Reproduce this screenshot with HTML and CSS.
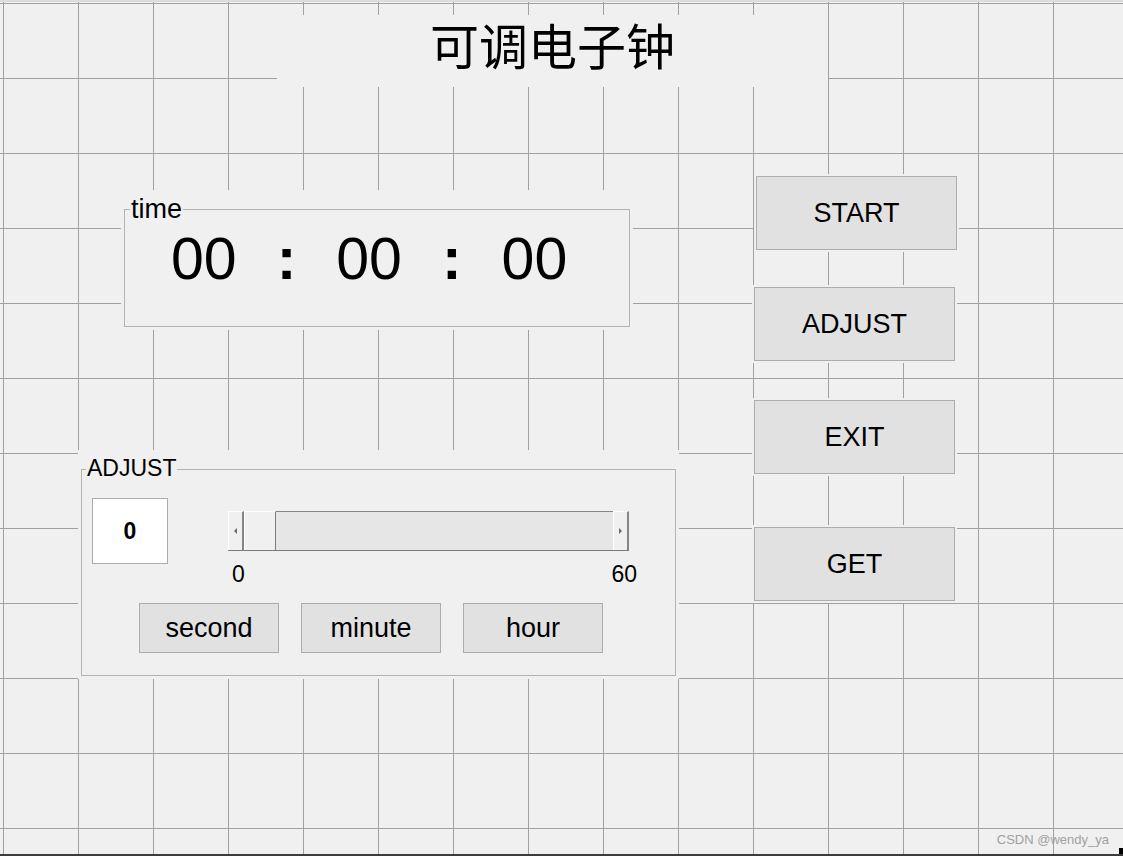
FILE: index.html
```html
<!DOCTYPE html>
<html lang="zh-CN">
<head>
    <meta charset="UTF-8">
    <meta name="viewport" content="width=device-width, initial-scale=1.0">
    <title>可调电子钟</title>
    <link rel="stylesheet" href="styles.css">
</head>
<body>
    <div class="figure">
        <div class="title">可调电子钟</div>
        <div class="workspace">
            <div class="panels">
                <div class="panel time-panel">
                    <span class="panel-label">time</span>
                    <div class="clock">
                        <span id="hours">00</span>
                        <span class="colon">:</span>
                        <span id="minutes">00</span>
                        <span class="colon">:</span>
                        <span id="seconds">00</span>
                    </div>
                </div>
                <div class="panel adjust-panel">
                    <span class="panel-label">ADJUST</span>
                    <div class="adjust-row">
                        <div class="edit-box" id="valueBox">0</div>
                        <div class="slider-group">
                            <div class="slider">
                                <span class="slider-arrow left"><i></i></span>
                                <span class="slider-thumb"></span>
                                <span class="slider-track"></span>
                                <span class="slider-arrow right"><i></i></span>
                            </div>
                            <div class="slider-scale">
                                <span>0</span>
                                <span>60</span>
                            </div>
                        </div>
                    </div>
                    <div class="unit-buttons">
                        <button class="btn unit-btn">second</button>
                        <button class="btn unit-btn">minute</button>
                        <button class="btn unit-btn">hour</button>
                    </div>
                </div>
            </div>
            <div class="actions">
                <button class="btn action-btn start">START</button>
                <button class="btn action-btn adjust">ADJUST</button>
                <button class="btn action-btn exit">EXIT</button>
                <button class="btn action-btn get">GET</button>
            </div>
        </div>
        <div class="watermark">CSDN @wendy_ya</div>
        <div class="resize-handle"></div>
    </div>
</body>
</html>
```

FILE: styles.css
```css
body {
    margin: 0;
    font-family: "Liberation Sans", Arial, sans-serif;
    color: #000;
}
.figure {
    position: relative;
    width: 1123px;
    height: 856px;
    box-sizing: border-box;
    border-top: 2px solid #dcdcdc;
    border-bottom: 2px solid #3c3c3c;
    background-color: #f0f0f0;
    background-image:
        linear-gradient(to right, #a0a0a0 1px, transparent 1px),
        linear-gradient(to bottom, #a0a0a0 1px, transparent 1px);
    background-size: 75px 75px;
    background-position: 3px 1px;
    overflow: hidden;
}
.title {
    margin: 13px 0 0 277px;
    width: 551px;
    height: 72px;
    background: #f0f0f0;
    font-family: "Noto Sans CJK SC", sans-serif;
    font-size: 49px;
    line-height: 58px;
    text-align: center;
}
.workspace {
    display: flex;
    align-items: flex-start;
}
.panels {
    display: flex;
    flex-direction: column;
    align-items: flex-start;
    margin-left: 81px;
}
.panel {
    position: relative;
    box-sizing: border-box;
    border: 1px solid #b4b4b4;
    background: #f0f0f0;
    box-shadow: 0 0 0 3px #f0f0f0, 0 -16px 0 3px #f0f0f0;
}
.panel-label {
    position: absolute;
    background: #f0f0f0;
    padding: 0 1px;
}
.time-panel {
    margin: 122px 0 0 43px;
    width: 506px;
    height: 118px;
    padding: 20px 0 0 46px;
}
.time-panel .panel-label {
    left: 5px;
    top: -14px;
    font-size: 27px;
    line-height: 27px;
}
.clock {
    display: flex;
    gap: 40px;
    font-size: 59px;
    line-height: 59px;
}
.colon {
    font-weight: bold;
}
.adjust-panel {
    margin-top: 142px;
    width: 595px;
    height: 207px;
    padding: 28px 0 0 10px;
}
.adjust-panel .panel-label {
    left: 4px;
    top: -13px;
    font-size: 23px;
    line-height: 23px;
}
.adjust-row {
    display: flex;
    align-items: flex-start;
}
.edit-box {
    width: 76px;
    height: 66px;
    box-sizing: border-box;
    border: 1px solid #acacac;
    background: #fff;
    display: flex;
    align-items: center;
    justify-content: center;
    font-size: 23px;
    font-weight: bold;
}
.slider-group {
    display: flex;
    flex-direction: column;
    margin: 13px 0 0 60px;
}
.slider {
    display: flex;
    width: 401px;
    height: 40px;
    box-sizing: border-box;
    border-bottom: 1px solid #7b7b7b;
}
.slider-arrow {
    width: 16px;
    box-sizing: border-box;
    background: #f0f0f0;
    border-top: 1px solid #fff;
    border-left: 1px solid #fff;
    border-right: 2px solid #858585;
    display: flex;
    align-items: center;
    justify-content: center;
}
.slider-arrow i {
    width: 0;
    height: 0;
    border-top: 3px solid transparent;
    border-bottom: 3px solid transparent;
}
.slider-arrow.left i {
    border-right: 3px solid #6a6a6a;
}
.slider-arrow.right i {
    border-left: 3px solid #6a6a6a;
}
.slider-thumb {
    width: 32px;
    box-sizing: border-box;
    background: #f0f0f0;
    border-top: 1px solid #fff;
    border-left: 1px solid #fff;
    border-right: 1px solid #7b7b7b;
}
.slider-track {
    flex: 1;
    background: #e6e6e6;
    border-top: 1px solid #858585;
}
.slider-scale {
    display: flex;
    justify-content: space-between;
    width: 409px;
    box-sizing: border-box;
    padding-left: 4px;
    margin-top: 12px;
    font-size: 23px;
    line-height: 23px;
}
.unit-buttons {
    display: flex;
    gap: 22px;
    margin: 17px 0 0 47px;
}
.btn {
    box-sizing: border-box;
    border: 1px solid #adadad;
    background: #e1e1e1;
    font-family: inherit;
    font-size: 27px;
    color: #000;
    padding: 0;
    cursor: pointer;
}
.unit-btn {
    width: 140px;
    height: 50px;
}
.actions {
    display: flex;
    flex-direction: column;
    align-items: flex-start;
    margin: 89px 0 0 78px;
}
.action-btn {
    width: 201px;
    height: 74px;
    box-shadow: 0 0 0 2px #f0f0f0;
}
.action-btn.start {
    margin-left: 2px;
}
.action-btn.adjust {
    margin-top: 37px;
}
.action-btn.exit {
    margin-top: 39px;
}
.action-btn.get {
    margin-top: 53px;
}
.watermark {
    position: absolute;
    right: 14px;
    bottom: 8px;
    font-size: 13px;
    line-height: 13px;
    color: #a0a0a0;
}
.resize-handle {
    position: absolute;
    right: 0;
    bottom: -2px;
    width: 4px;
    height: 8px;
    background: #000;
}
```
